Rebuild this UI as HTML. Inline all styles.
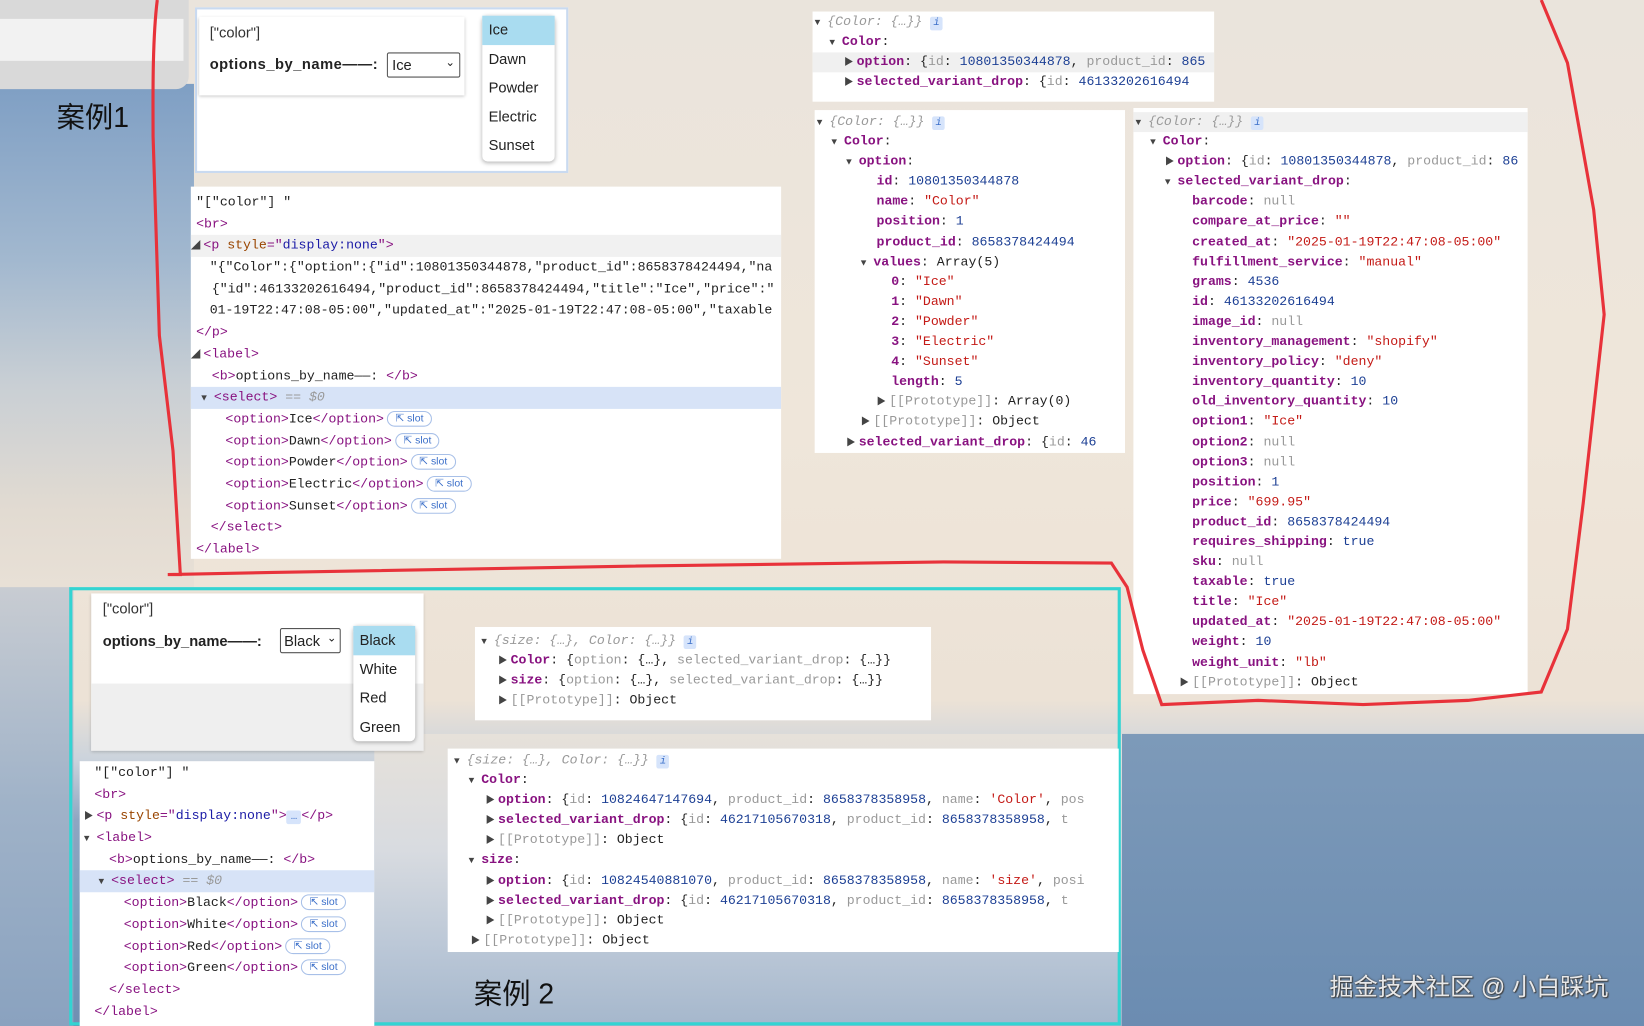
<!DOCTYPE html>
<html><head><meta charset="utf-8">
<style>
*{margin:0;padding:0;box-sizing:border-box}
html,body{width:1644px;height:1026px;overflow:hidden}
#bg{position:absolute;left:0;top:0;width:1644px;height:1026px;overflow:hidden;
background:linear-gradient(180deg,#eae4dc 0px,#efe6da 420px,#ece2d6 700px,#cbd3dc 760px,#8ea6c2 820px,#6f8fb2 1026px);}
#wrap{position:absolute;left:0;top:0;width:1568px;height:979px;transform:scale(1.04847);transform-origin:0 0;
font-family:"Liberation Mono","Noto Sans CJK SC",monospace;font-size:12.6px;color:#222}
.abs{position:absolute}
.card{position:absolute;background:#fff}
.k{color:#881280;font-weight:bold}
.s{color:#c41a16}
.n{color:#1c3f94}
.g{color:#999}
.t{color:#881280}
.an{color:#994500}
.av{color:#1a1aa6}
.ar{display:inline-block;width:12px;color:#444;font-size:9px}
.con div{height:19.1px;line-height:19.1px;white-space:nowrap}
.dom div{height:20.7px;line-height:20.7px;white-space:nowrap}
.slot{display:inline-block;border:1px solid #a8c0e8;border-radius:9px;color:#3b6fc9;font-family:"Liberation Sans",sans-serif;font-size:10px;line-height:13px;padding:0 7px;margin-left:3px;vertical-align:1px}
.i{display:inline-block;background:#d6e4fb;color:#3b6fc9;font-size:10px;width:12px;text-align:center;font-style:italic;line-height:13px;border-radius:2px}
.sans{font-family:"Liberation Sans","Noto Sans CJK SC",sans-serif}
.opt div{height:27.6px;line-height:27.6px;padding-left:6px;font-family:"Liberation Sans",sans-serif;font-size:14px}
</style></head><body>
<div id="bg"></div>
<div id="wrap">
<!-- left sky -->
<div class="abs" style="left:0;top:80px;width:185px;height:480px;background:linear-gradient(180deg,#7f9fc4 0%,#a2b8cf 35%,#c9cfd4 60%,#e2dbd2 85%,#e8e0d6 100%)"></div>
<div class="abs" style="left:0;top:0;width:180px;height:85px;background:#d9d9d9;border-radius:0 0 12px 0"></div>
<div class="abs" style="left:0;top:18px;width:175px;height:40px;background:#f2f2f2"></div>
<!-- lower dunes -->
<div class="abs" style="left:1070px;top:700px;width:498px;height:279px;background:linear-gradient(180deg,#7d9ab9,#6b8cb1)"></div>
<div class="abs" style="left:0;top:560px;width:70px;height:419px;background:linear-gradient(180deg,#c8ccd2,#9fb2c8 50%,#8aa2bf)"></div>
<div class="abs" style="left:357px;top:700px;width:713px;height:279px;background:linear-gradient(180deg,#e6e1da 0%,#d8dbe0 40%,#b9c6d6 75%,#a5b7cc 100%)"></div>

<div class="abs sans" style="left:54px;top:90px;font-size:27px;color:#111">案例1</div>

<!-- case1 preview -->
<div class="card" style="left:186px;top:7px;width:356px;height:158px;background:#fff;border:2px solid #c9daf0"></div>
<div class="card sans" style="left:190px;top:16px;width:253px;height:75px;box-shadow:0 1px 3px rgba(0,0,0,.25);font-size:14px">
 <div class="abs" style="left:10px;top:7px;color:#333">["color"]</div>
 <div class="abs" style="left:10px;top:37px;font-weight:bold;letter-spacing:.5px">options_by_name——:</div>
 <div class="abs" style="left:179px;top:34px;width:70px;height:24px;border:1px solid #555;border-radius:2px;padding:3px 4px">Ice<span style="position:absolute;right:4px;top:2px;font-size:11px">&#8964;</span></div>
</div>
<div class="card opt" style="left:460px;top:15px;width:69px;height:139px;border-radius:5px;box-shadow:0 1px 4px rgba(0,0,0,.3)">
 <div style="background:#a9dcf0">Ice</div><div>Dawn</div><div>Powder</div><div>Electric</div><div>Sunset</div>
</div>

<!-- DOM panel 1 -->
<div class="card dom" style="left:182px;top:178px;width:563px;height:355px;padding-top:5px;overflow:hidden">
<div style="padding-left:5px">"["color"] "</div>
<div style="padding-left:5px"><span class="t">&lt;br&gt;</span></div>
<div style="background:#f1f1f1"><span class="ar">&#9698;</span><span class="t">&lt;p </span><span class="an">style</span><span class="t">="</span><span class="av">display:none</span><span class="t">"&gt;</span></div>
<div style="padding-left:18px">"{"Color":{"option":{"id":10801350344878,"product_id":8658378424494,"na</div>
<div style="padding-left:20px">{"id":46133202616494,"product_id":8658378424494,"title":"Ice","price":"</div>
<div style="padding-left:18px">01-19T22:47:08-05:00","updated_at":"2025-01-19T22:47:08-05:00","taxable</div>
<div style="padding-left:5px"><span class="t">&lt;/p&gt;</span></div>
<div><span class="ar">&#9698;</span><span class="t">&lt;label&gt;</span></div>
<div style="padding-left:20px"><span class="t">&lt;b&gt;</span>options_by_name——: <span class="t">&lt;/b&gt;</span></div>
<div style="background:#d7e3f7;padding-left:10px"><span class="ar">&#9660;</span><span class="t">&lt;select&gt;</span> <span class="g">==</span> <i class="g">$0</i></div>
<div style="padding-left:33px"><span class="t">&lt;option&gt;</span>Ice<span class="t">&lt;/option&gt;</span><span class="slot">&#8689; slot</span></div>
<div style="padding-left:33px"><span class="t">&lt;option&gt;</span>Dawn<span class="t">&lt;/option&gt;</span><span class="slot">&#8689; slot</span></div>
<div style="padding-left:33px"><span class="t">&lt;option&gt;</span>Powder<span class="t">&lt;/option&gt;</span><span class="slot">&#8689; slot</span></div>
<div style="padding-left:33px"><span class="t">&lt;option&gt;</span>Electric<span class="t">&lt;/option&gt;</span><span class="slot">&#8689; slot</span></div>
<div style="padding-left:33px"><span class="t">&lt;option&gt;</span>Sunset<span class="t">&lt;/option&gt;</span><span class="slot">&#8689; slot</span></div>
<div style="padding-left:19px"><span class="t">&lt;/select&gt;</span></div>
<div style="padding-left:5px"><span class="t">&lt;/label&gt;</span></div>
</div>

<!-- console P1 -->
<div class="card con" style="left:775px;top:11px;width:383px;height:86px;padding-top:1px;overflow:hidden">
<div style="padding-left:2px"><span class="ar">&#9660;</span><i class="g">{Color: {…}}</i> <span class="i">i</span></div>
<div style="padding-left:16px"><span class="ar">&#9660;</span><span class="k">Color</span>:</div>
<div style="padding-left:30px;background:#f0f0f0"><span class="ar">&#9654;</span><span class="k">option</span>: {<span class="g">id</span>: <span class="n">10801350344878</span>, <span class="g">product_id</span>: <span class="n">865</span></div>
<div style="padding-left:30px"><span class="ar">&#9654;</span><span class="k">selected_variant_drop</span>: {<span class="g">id</span>: <span class="n">46133202616494</span></div>
</div>

<!-- console P2 -->
<div class="card con" style="left:777px;top:105px;width:296px;height:327px;padding-top:2px;overflow:hidden">
<div style="padding-left:2px"><span class="ar">&#9660;</span><i class="g">{Color: {…}}</i> <span class="i">i</span></div>
<div style="padding-left:16px"><span class="ar">&#9660;</span><span class="k">Color</span>:</div>
<div style="padding-left:30px"><span class="ar">&#9660;</span><span class="k">option</span>:</div>
<div style="padding-left:59px"><span class="k">id</span>: <span class="n">10801350344878</span></div>
<div style="padding-left:59px"><span class="k">name</span>: <span class="s">"Color"</span></div>
<div style="padding-left:59px"><span class="k">position</span>: <span class="n">1</span></div>
<div style="padding-left:59px"><span class="k">product_id</span>: <span class="n">8658378424494</span></div>
<div style="padding-left:44px"><span class="ar">&#9660;</span><span class="k">values</span>: Array(5)</div>
<div style="padding-left:73px"><span class="k">0</span>: <span class="s">"Ice"</span></div>
<div style="padding-left:73px"><span class="k">1</span>: <span class="s">"Dawn"</span></div>
<div style="padding-left:73px"><span class="k">2</span>: <span class="s">"Powder"</span></div>
<div style="padding-left:73px"><span class="k">3</span>: <span class="s">"Electric"</span></div>
<div style="padding-left:73px"><span class="k">4</span>: <span class="s">"Sunset"</span></div>
<div style="padding-left:73px"><span class="k">length</span>: <span class="n">5</span></div>
<div style="padding-left:59px"><span class="ar">&#9654;</span><span class="g">[[Prototype]]</span>: Array(0)</div>
<div style="padding-left:44px"><span class="ar">&#9654;</span><span class="g">[[Prototype]]</span>: Object</div>
<div style="padding-left:30px"><span class="ar">&#9654;</span><span class="k">selected_variant_drop</span>: {<span class="g">id</span>: <span class="n">46</span></div>
</div>

<!-- console P3 -->
<div class="card con" style="left:1081px;top:103px;width:376px;height:559px;padding-top:4px;overflow:hidden">
<div style="background:#f0f0f0;padding-left:2px"><span class="ar">&#9660;</span><i class="g">{Color: {…}}</i> <span class="i">i</span></div>
<div style="padding-left:16px"><span class="ar">&#9660;</span><span class="k">Color</span>:</div>
<div style="padding-left:30px"><span class="ar">&#9654;</span><span class="k">option</span>: {<span class="g">id</span>: <span class="n">10801350344878</span>, <span class="g">product_id</span>: <span class="n">86</span></div>
<div style="padding-left:30px"><span class="ar">&#9660;</span><span class="k">selected_variant_drop</span>:</div>
<div style="padding-left:56px"><span class="k">barcode</span>: <span class="g">null</span></div>
<div style="padding-left:56px"><span class="k">compare_at_price</span>: <span class="s">""</span></div>
<div style="padding-left:56px"><span class="k">created_at</span>: <span class="s">"2025-01-19T22:47:08-05:00"</span></div>
<div style="padding-left:56px"><span class="k">fulfillment_service</span>: <span class="s">"manual"</span></div>
<div style="padding-left:56px"><span class="k">grams</span>: <span class="n">4536</span></div>
<div style="padding-left:56px"><span class="k">id</span>: <span class="n">46133202616494</span></div>
<div style="padding-left:56px"><span class="k">image_id</span>: <span class="g">null</span></div>
<div style="padding-left:56px"><span class="k">inventory_management</span>: <span class="s">"shopify"</span></div>
<div style="padding-left:56px"><span class="k">inventory_policy</span>: <span class="s">"deny"</span></div>
<div style="padding-left:56px"><span class="k">inventory_quantity</span>: <span class="n">10</span></div>
<div style="padding-left:56px"><span class="k">old_inventory_quantity</span>: <span class="n">10</span></div>
<div style="padding-left:56px"><span class="k">option1</span>: <span class="s">"Ice"</span></div>
<div style="padding-left:56px"><span class="k">option2</span>: <span class="g">null</span></div>
<div style="padding-left:56px"><span class="k">option3</span>: <span class="g">null</span></div>
<div style="padding-left:56px"><span class="k">position</span>: <span class="n">1</span></div>
<div style="padding-left:56px"><span class="k">price</span>: <span class="s">"699.95"</span></div>
<div style="padding-left:56px"><span class="k">product_id</span>: <span class="n">8658378424494</span></div>
<div style="padding-left:56px"><span class="k">requires_shipping</span>: <span class="n">true</span></div>
<div style="padding-left:56px"><span class="k">sku</span>: <span class="g">null</span></div>
<div style="padding-left:56px"><span class="k">taxable</span>: <span class="n">true</span></div>
<div style="padding-left:56px"><span class="k">title</span>: <span class="s">"Ice"</span></div>
<div style="padding-left:56px"><span class="k">updated_at</span>: <span class="s">"2025-01-19T22:47:08-05:00"</span></div>
<div style="padding-left:56px"><span class="k">weight</span>: <span class="n">10</span></div>
<div style="padding-left:56px"><span class="k">weight_unit</span>: <span class="s">"lb"</span></div>
<div style="padding-left:44px"><span class="ar">&#9654;</span><span class="g">[[Prototype]]</span>: Object</div>
</div>

<!-- red outline -->
<svg class="abs" style="left:0;top:0" width="1568" height="979">
<path d="M150 0 C145 40 146 100 146 130 L152 320 L165 430 L172 548 L160 548 L260 546 L600 540 L900 536 L1060 537 L1075 560 L1090 620 L1108 672 L1200 668 L1300 672 L1400 668 L1470 660 L1495 600 L1510 480 L1530 300 L1520 200 L1495 60 L1470 0" fill="none" stroke="#e8323a" stroke-width="3"/>
<rect x="67.5" y="561.5" width="1000" height="415" fill="none" stroke="#33d4d2" stroke-width="3"/>
</svg>

<!-- case2 preview -->
<div class="card sans" style="left:87px;top:566px;width:317px;height:150px;font-size:14px;box-shadow:0 1px 3px rgba(0,0,0,.2)">
 <div class="abs" style="left:0;top:86px;width:317px;height:64px;background:#efefef"></div>
 <div class="abs" style="left:11px;top:6px;color:#333">["color"]</div>
 <div class="abs" style="left:11px;top:37px;font-weight:bold">options_by_name——:</div>
 <div class="abs" style="left:180px;top:33px;width:58px;height:24px;border:1px solid #555;border-radius:2px;padding:3px 3px">Black<span style="position:absolute;right:3px;top:2px;font-size:11px">&#8964;</span></div>
</div>
<div class="card opt" style="left:337px;top:597px;width:59px;height:110px;border-radius:5px;box-shadow:0 1px 4px rgba(0,0,0,.3)">
 <div style="background:#a9dcf0">Black</div><div>White</div><div>Red</div><div>Green</div>
</div>

<!-- DOM panel 2 -->
<div class="card dom" style="left:76px;top:726px;width:281px;height:253px;padding-top:1px;overflow:hidden">
<div style="padding-left:14px">"["color"] "</div>
<div style="padding-left:14px"><span class="t">&lt;br&gt;</span></div>
<div style="padding-left:4px"><span class="ar">&#9654;</span><span class="t">&lt;p </span><span class="an">style</span><span class="t">="</span><span class="av">display:none</span><span class="t">"&gt;</span><span class="i" style="font-style:normal;width:14px">…</span><span class="t">&lt;/p&gt;</span></div>
<div style="padding-left:4px"><span class="ar">&#9660;</span><span class="t">&lt;label&gt;</span></div>
<div style="padding-left:28px"><span class="t">&lt;b&gt;</span>options_by_name——: <span class="t">&lt;/b&gt;</span></div>
<div style="background:#d7e3f7;padding-left:18px"><span class="ar">&#9660;</span><span class="t">&lt;select&gt;</span> <span class="g">==</span> <i class="g">$0</i></div>
<div style="padding-left:42px"><span class="t">&lt;option&gt;</span>Black<span class="t">&lt;/option&gt;</span><span class="slot">&#8689; slot</span></div>
<div style="padding-left:42px"><span class="t">&lt;option&gt;</span>White<span class="t">&lt;/option&gt;</span><span class="slot">&#8689; slot</span></div>
<div style="padding-left:42px"><span class="t">&lt;option&gt;</span>Red<span class="t">&lt;/option&gt;</span><span class="slot">&#8689; slot</span></div>
<div style="padding-left:42px"><span class="t">&lt;option&gt;</span>Green<span class="t">&lt;/option&gt;</span><span class="slot">&#8689; slot</span></div>
<div style="padding-left:28px"><span class="t">&lt;/select&gt;</span></div>
<div style="padding-left:14px"><span class="t">&lt;/label&gt;</span></div>
</div>

<!-- console Q1 -->
<div class="card con" style="left:453px;top:598px;width:435px;height:89px;padding-top:4px;overflow:hidden">
<div style="padding-left:6px"><span class="ar">&#9660;</span><i class="g">{size: {…}, Color: {…}}</i> <span class="i">i</span></div>
<div style="padding-left:22px"><span class="ar">&#9654;</span><span class="k">Color</span>: {<span class="g">option</span>: {…}, <span class="g">selected_variant_drop</span>: {…}}</div>
<div style="padding-left:22px"><span class="ar">&#9654;</span><span class="k">size</span>: {<span class="g">option</span>: {…}, <span class="g">selected_variant_drop</span>: {…}}</div>
<div style="padding-left:22px"><span class="ar">&#9654;</span><span class="g">[[Prototype]]</span>: Object</div>
</div>

<!-- console Q2 -->
<div class="card con" style="left:427px;top:714px;width:640px;height:194px;padding-top:2px;overflow:hidden">
<div style="padding-left:6px"><span class="ar">&#9660;</span><i class="g">{size: {…}, Color: {…}}</i> <span class="i">i</span></div>
<div style="padding-left:20px"><span class="ar">&#9660;</span><span class="k">Color</span>:</div>
<div style="padding-left:36px"><span class="ar">&#9654;</span><span class="k">option</span>: {<span class="g">id</span>: <span class="n">10824647147694</span>, <span class="g">product_id</span>: <span class="n">8658378358958</span>, <span class="g">name</span>: <span class="s">'Color'</span>, <span class="g">pos</span></div>
<div style="padding-left:36px"><span class="ar">&#9654;</span><span class="k">selected_variant_drop</span>: {<span class="g">id</span>: <span class="n">46217105670318</span>, <span class="g">product_id</span>: <span class="n">8658378358958</span>, <span class="g">t</span></div>
<div style="padding-left:36px"><span class="ar">&#9654;</span><span class="g">[[Prototype]]</span>: Object</div>
<div style="padding-left:20px"><span class="ar">&#9660;</span><span class="k">size</span>:</div>
<div style="padding-left:36px"><span class="ar">&#9654;</span><span class="k">option</span>: {<span class="g">id</span>: <span class="n">10824540881070</span>, <span class="g">product_id</span>: <span class="n">8658378358958</span>, <span class="g">name</span>: <span class="s">'size'</span>, <span class="g">posi</span></div>
<div style="padding-left:36px"><span class="ar">&#9654;</span><span class="k">selected_variant_drop</span>: {<span class="g">id</span>: <span class="n">46217105670318</span>, <span class="g">product_id</span>: <span class="n">8658378358958</span>, <span class="g">t</span></div>
<div style="padding-left:36px"><span class="ar">&#9654;</span><span class="g">[[Prototype]]</span>: Object</div>
<div style="padding-left:22px"><span class="ar">&#9654;</span><span class="g">[[Prototype]]</span>: Object</div>
</div>

<div class="abs sans" style="left:452px;top:926px;font-size:27px;color:#111">案例 2</div>
<div class="abs sans" style="left:1268px;top:922px;font-size:23px;color:#e8e8e8;text-shadow:0 0 2px #333,1px 1px 1px #444">掘金技术社区 @ 小白踩坑</div>
</div>
</body></html>
